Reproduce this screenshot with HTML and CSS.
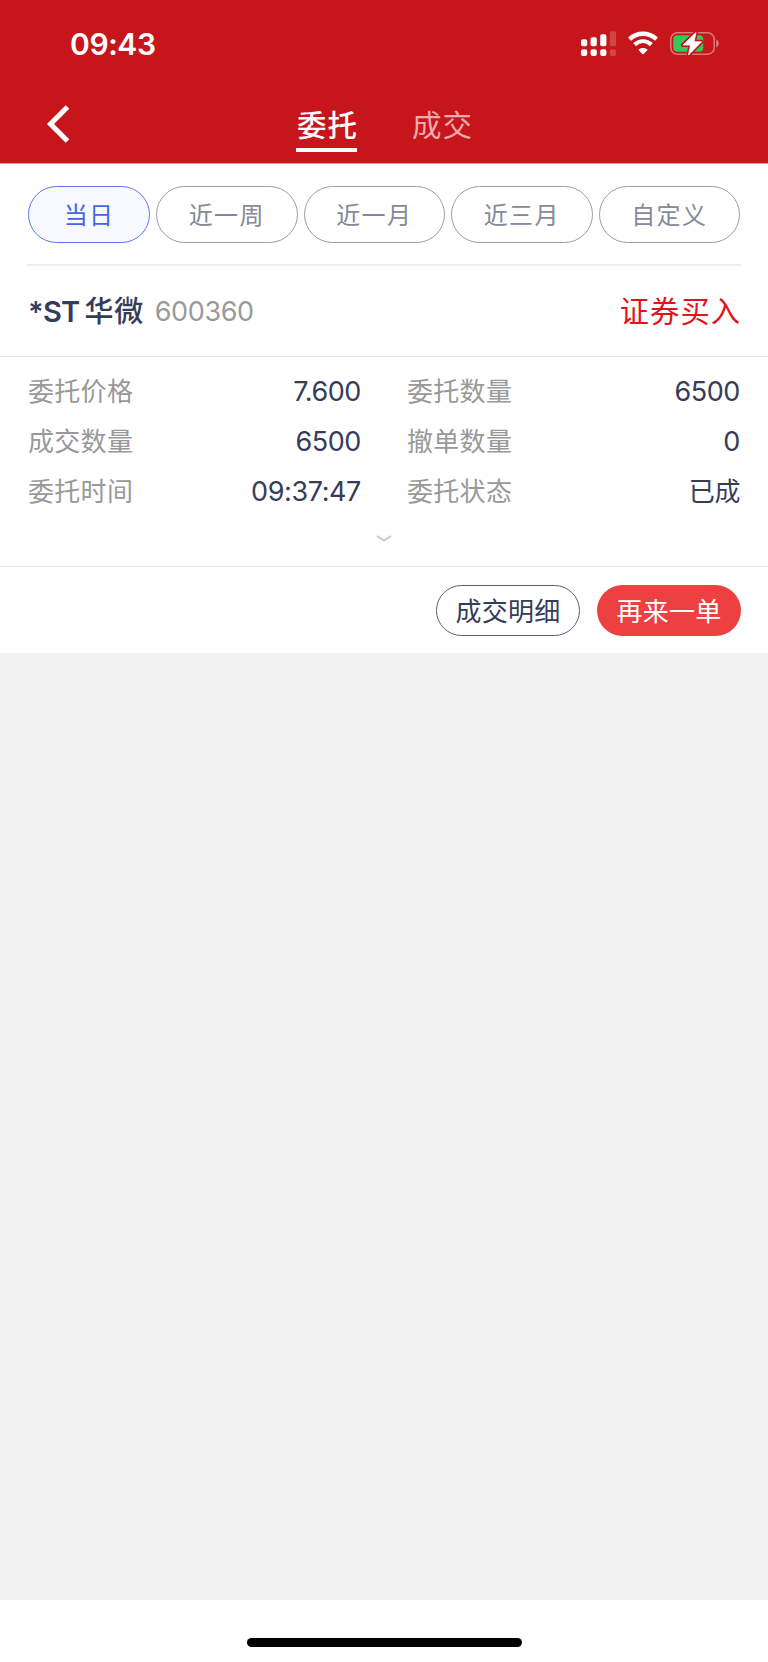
FILE: index.html
```html
<!DOCTYPE html>
<html lang="zh-CN">
<head>
<meta charset="utf-8">
<title>委托</title>
<link rel="stylesheet" href="styles.css">
</head>
<body>
<div class="page">

<header class="header">
  <div class="status">
    <span class="time">09:43</span>
    <div class="status-icons">
      <svg class="signal" width="36" height="26" viewBox="0 0 36 26" fill="#fff">
        <rect x="0" y="8.2" width="6.2" height="7" rx="1.8"/>
        <rect x="9.6" y="6.2" width="6.2" height="9" rx="1.8"/>
        <rect x="19.2" y="3.2" width="6.2" height="12" rx="1.8"/>
        <rect x="28.8" y="0.2" width="6.2" height="15" rx="1.8" opacity=".2"/>
        <rect x="0" y="18.2" width="6.2" height="6.8" rx="2"/>
        <rect x="9.6" y="18.2" width="6.2" height="6.8" rx="2"/>
        <rect x="19.2" y="18.2" width="6.2" height="6.8" rx="2"/>
        <rect x="28.8" y="18.2" width="6.2" height="6.8" rx="2" opacity=".2"/>
      </svg>
      <svg class="wifi" width="30" height="24" viewBox="0 0 30 24">
        <path d="M1.5 8.2C9.5 1 20.5 1 28.5 8.2" fill="none" stroke="#fff" stroke-width="4.4"/>
        <path d="M6.6 13.6C11.7 9.1 18.3 9.1 23.4 13.6" fill="none" stroke="#fff" stroke-width="4.2"/>
        <path d="M10.3 18.8C13 16.5 17 16.5 19.7 18.8L15.7 22.9Q15 23.5 14.3 22.9Z" fill="#fff"/>
      </svg>
      <svg class="battery" width="50" height="26" viewBox="0 0 50 26">
        <rect x=".8" y="1.8" width="43.4" height="21.4" rx="6.5" fill="none" stroke="#fff" stroke-width="1.5" opacity=".42"/>
        <path d="M46.3 8.5c3.3 1.7 3.3 6.3 0 8z" fill="#fff" opacity=".45"/>
        <rect x="3.3" y="4.2" width="30" height="16.6" rx="4" fill="#34c759"/>
        <path d="M26 1.5L13 14H20.5L18.5 24L31.5 10.8H24Z" fill="#fff" stroke="#c6161b" stroke-width="4" stroke-linejoin="round"/>
        <path d="M26 1.5L13 14H20.5L18.5 24L31.5 10.8H24Z" fill="#fff" stroke="#fff" stroke-width=".8" stroke-linejoin="round"/>
      </svg>
    </div>
  </div>
  <nav class="nav">
    <svg class="back" width="24" height="40" viewBox="0 0 24 40">
      <path d="M21.5 2L4.5 19L21.5 36" fill="none" stroke="#fff" stroke-width="5"/>
    </svg>
    <div class="tabs">
      <span class="tab active">委托</span>
      <span class="tab">成交</span>
    </div>
  </nav>
</header>

<div class="filter">
  <button class="pill on">当日</button>
  <button class="pill">近一周</button>
  <button class="pill">近一月</button>
  <button class="pill">近三月</button>
  <button class="pill">自定义</button>
</div>

<div class="stock">
  <span class="name">*ST<span class="cn">华微</span></span>
  <span class="code">600360</span>
  <span class="side">证券买入</span>
</div>

<div class="detail">
  <dl class="col">
    <div class="row"><dt>委托价格</dt><dd>7.600</dd></div>
    <div class="row"><dt>成交数量</dt><dd>6500</dd></div>
    <div class="row"><dt>委托时间</dt><dd>09:37:47</dd></div>
  </dl>
  <dl class="col">
    <div class="row"><dt>委托数量</dt><dd>6500</dd></div>
    <div class="row"><dt>撤单数量</dt><dd>0</dd></div>
    <div class="row"><dt>委托状态</dt><dd class="zh">已成</dd></div>
  </dl>
</div>
<div class="more">
  <svg width="16" height="8" viewBox="0 0 16 8">
    <path d="M1 1L8 5.5L15 1" fill="none" stroke="#c3c4cd" stroke-width="1.5"/>
  </svg>
</div>

<div class="actions">
  <button class="btn">成交明细</button>
  <button class="btn again">再来一单</button>
</div>

<div class="blank"></div>
<footer class="bottom"><div class="home-bar"></div></footer>

</div>
</body>
</html>
```
FILE: styles.css
```css
* {
  box-sizing: border-box;
}
body {
  margin: 0;
  font-family: Inter, "Noto Sans CJK SC", sans-serif;
  background: #fff;
  color: #363c58;
}
button {
  font-family: inherit;
  padding: 0;
}
.page {
  width: 768px;
  height: 1662px;
  display: flex;
  flex-direction: column;
}

/* header */
.header {
  height: 164px;
  background: #c6161b;
  color: #fff;
  border-bottom: 1px solid #ea9799;
}
.status {
  display: flex;
  justify-content: space-between;
  height: 87px;
  padding: 0 48px 0 70px;
}
.time {
  font-size: 30px;
  font-weight: 600;
  letter-spacing: -.4px;
  line-height: 88px;
}
.status-icons {
  display: flex;
  align-items: flex-start;
  padding-top: 31px;
}
.wifi {
  margin-left: 11px;
}
.battery {
  margin-left: 12px;
}
.nav {
  display: flex;
  height: 76px;
}
.back {
  margin: 18px 0 0 46px;
}
.tabs {
  display: flex;
  gap: 54px;
  margin-left: 226px;
}
.tab {
  width: 61px;
  height: 65px;
  line-height: 76px;
  font-size: 29.5px;
  letter-spacing: 1px;
  padding-left: 1px;
  white-space: nowrap;
  color: #f4a9ab;
}
.tab.active {
  color: #fff;
  font-weight: 500;
  border-bottom: 4px solid #fff;
}

/* date filter */
.filter {
  display: flex;
  gap: 6px;
  height: 102px;
  margin: 0 27px;
  padding: 22px 1px 0;
  border-bottom: 2px solid #eee;
}
.pill {
  flex: 1;
  height: 57px;
  padding-bottom: 2px;
  border: 1px solid #9a9dad;
  border-radius: 29px;
  background: #fff;
  color: #858999;
  font-size: 24px;
  letter-spacing: 1.3px;
}
.pill.on {
  flex: 0 0 122px;
  border-color: #5b7cee;
  background: #f7f9fe;
  color: #4664e6;
}

/* order card */
.stock {
  display: flex;
  height: 91px;
  line-height: 92px;
  padding: 0 28px;
  border-bottom: 1px solid #e8e8e8;
}
.name {
  font-size: 29px;
  font-weight: 600;
  letter-spacing: -.7px;
}
.cn {
  margin-left: 5px;
  letter-spacing: .6px;
  font-weight: 500;
}
.code {
  margin-left: 11px;
  font-size: 27px;
  letter-spacing: -.4px;
  color: #999;
}
.side {
  margin-left: auto;
  font-size: 29.3px;
  letter-spacing: 1px;
  margin-right: -1px;
  color: #e0141a;
}
.detail {
  display: flex;
  gap: 46px;
  padding: 10px 28px 0;
}
.col {
  flex: 1;
  margin: 0;
}
.row {
  display: flex;
  justify-content: space-between;
  height: 50px;
  line-height: 50px;
}
.row dt {
  font-size: 26px;
  letter-spacing: .3px;
  color: #999;
}
.row dd {
  margin: 0;
  font-size: 27px;
  letter-spacing: -.4px;
}
.row dd.zh {
  font-size: 26px;
}
.more {
  display: flex;
  justify-content: center;
  height: 50px;
  padding-top: 18px;
  border-bottom: 1px solid #e8e8e8;
}
.actions {
  display: flex;
  justify-content: flex-end;
  gap: 17px;
  height: 86px;
  padding: 18px 27px 0;
}
.btn {
  width: 144px;
  height: 51px;
  padding-bottom: 2px;
  border: 1px solid #5b607a;
  border-radius: 26px;
  background: #fff;
  color: #363c58;
  font-size: 26px;
  letter-spacing: .3px;
}
.btn.again {
  border: none;
  background: #ec4041;
  color: #fff;
}

.blank {
  flex: 1;
  background: #f1f1f1;
}
.bottom {
  height: 62px;
  padding-top: 38px;
}
.home-bar {
  width: 275px;
  height: 9px;
  margin: 0 auto;
  border-radius: 5px;
  background: #000;
}
```
